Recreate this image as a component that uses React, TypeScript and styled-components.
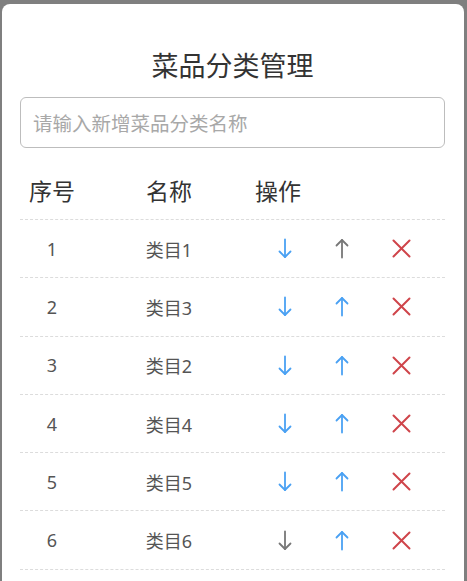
import React from "react";
import styled, { createGlobalStyle } from "styled-components";

const GlobalStyle = createGlobalStyle`
  html, body { margin: 0; padding: 0; }
  body {
    background: #7f7f7f;
    font-family: "Noto Sans", "Noto Sans CJK SC", sans-serif;
    overflow: hidden;
  }
`;

const Page = styled.div`
  height: 581px;
  display: flex;
  padding: 4px 3px 0 2px;
  box-sizing: border-box;
`;

const Modal = styled.div`
  flex: 1;
  background: #fff;
  border-radius: 8px 8px 0 0;
  padding: 0 19px 0 18px;
  display: flex;
  flex-direction: column;
`;

const Title = styled.h2`
  margin: 0;
  padding-top: 48px;
  font-size: 27px;
  line-height: 26px;
  font-weight: 400;
  color: #333;
  text-align: center;
  font-family: "Noto Sans CJK SC", sans-serif;
`;

const Input = styled.input`
  margin-top: 19px;
  height: 51px;
  box-sizing: border-box;
  border: 1px solid #bdbdbd;
  border-radius: 6px;
  padding: 0 12px;
  font-size: 19.5px;
  font-family: "Noto Sans CJK SC", sans-serif;
  outline: none;
  &::placeholder { color: #a8a8a8; }
`;

const HeaderRow = styled.div`
  display: grid;
  grid-template-columns: 64px 170px 1fr;
  padding: 31px 0 17px;
  border-bottom: 1px dashed #dcdcdc;
  font-size: 23px;
  line-height: 23px;
  color: #333;
  font-family: "Noto Sans CJK SC", sans-serif;
`;

const HeadCell = styled.div<{ $align?: string }>`
  text-align: ${(p) => p.$align || "center"};
  padding-left: ${(p) => (p.$align === "left" ? "1px" : "0")};
`;

const Row = styled.div`
  display: grid;
  grid-template-columns: 64px 170px 62px 52px 66px 1fr;
  height: 58.3px;
  align-items: center;
  border-bottom: 1px dashed #dcdcdc;
  box-sizing: border-box;
  font-size: 18px;
  color: #555;
`;

const Cell = styled.div`
  display: flex;
  justify-content: center;
  align-items: center;
`;

const IconBtn = styled.button<{ $color: string }>`
  border: none;
  background: none;
  padding: 0;
  display: flex;
  color: ${(p) => p.$color};
  cursor: pointer;
`;

const BLUE = "#4aa1f3";
const GREY = "#777";
const RED = "#cf444a";

const Down = () => (
  <svg width="14" height="21" viewBox="0 0 14 21" fill="none" stroke="currentColor" strokeWidth="1.8" strokeLinecap="round" strokeLinejoin="round">
    <path d="M7 1.5V19" />
    <path d="M1.5 13.5L7 19l5.5-5.5" />
  </svg>
);

const Up = () => (
  <svg width="14" height="21" viewBox="0 0 14 21" fill="none" stroke="currentColor" strokeWidth="1.8" strokeLinecap="round" strokeLinejoin="round">
    <path d="M7 19.5V2" />
    <path d="M1.5 7.5L7 2l5.5 5.5" />
  </svg>
);

const Close = () => (
  <svg width="19" height="19" viewBox="0 0 19 19" fill="none" stroke="currentColor" strokeWidth="2" strokeLinecap="round">
    <path d="M1.5 1.5l16 16M17.5 1.5l-16 16" />
  </svg>
);

const items = [
  { id: 1, name: "类目1" },
  { id: 2, name: "类目3" },
  { id: 3, name: "类目2" },
  { id: 4, name: "类目4" },
  { id: 5, name: "类目5" },
  { id: 6, name: "类目6" },
];

export default function App() {
  return (
    <Page>
      <GlobalStyle />
      <Modal>
        <Title>菜品分类管理</Title>
        <Input placeholder="请输入新增菜品分类名称" />
        <HeaderRow>
          <HeadCell>序号</HeadCell>
          <HeadCell>名称</HeadCell>
          <HeadCell $align="left">操作</HeadCell>
        </HeaderRow>
        {items.map((it, i) => (
          <Row key={it.id}>
            <Cell>{it.id}</Cell>
            <Cell>{it.name}</Cell>
            <Cell>
              <IconBtn $color={i === items.length - 1 ? GREY : BLUE}><Down /></IconBtn>
            </Cell>
            <Cell>
              <IconBtn $color={i === 0 ? GREY : BLUE}><Up /></IconBtn>
            </Cell>
            <Cell>
              <IconBtn $color={RED}><Close /></IconBtn>
            </Cell>
          </Row>
        ))}
      </Modal>
    </Page>
  );
}
